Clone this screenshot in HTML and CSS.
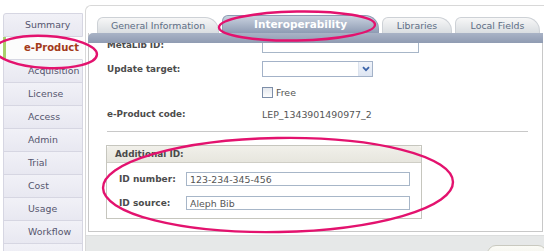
FILE: index.html
```html
<!DOCTYPE html>
<html lang="en">
<head>
  <meta charset="UTF-8">
  <title>e-Product - Interoperability</title>
  <link rel="stylesheet" href="styles.css">
</head>
<body>
  <div class="screen">
    <nav class="side">
      <a class="side-item first">Summary</a>
      <a class="side-item active">e-Product</a>
      <a class="side-item">Acquisition</a>
      <a class="side-item">License</a>
      <a class="side-item">Access</a>
      <a class="side-item">Admin</a>
      <a class="side-item">Trial</a>
      <a class="side-item">Cost</a>
      <a class="side-item">Usage</a>
      <a class="side-item">Workflow</a>
      <a class="side-item">&nbsp;</a>
    </nav>

    <div class="main">
      <div class="tabs">
        <div class="tab tab-general">General Information</div>
        <div class="tab tab-interop selected">Interoperability</div>
        <div class="tab tab-libraries">Libraries</div>
        <div class="tab tab-local">Local Fields</div>
      </div>

      <div class="panel">
        <div class="panel-band"></div>
        <div class="panel-body">
          <div class="row row-metalib">
            <label class="label">MetaLib ID:</label>
            <input class="text-input wide" type="text">
          </div>
          <div class="row row-update">
            <label class="label">Update target:</label>
            <div class="select">
              <span class="select-value"></span>
              <span class="select-arrow">
                <svg width="8" height="6" viewBox="0 0 8 6"><path d="M1 1.2 L4 4.2 L7 1.2" fill="none" stroke="#3b63a8" stroke-width="1.8"/></svg>
              </span>
            </div>
          </div>
          <div class="row row-free">
            <span class="label"></span>
            <span class="checkbox"></span>
            <span class="check-text">Free</span>
          </div>
          <div class="row row-code">
            <label class="label">e-Product code:</label>
            <span class="value">LEP_1343901490977_2</span>
          </div>

          <div class="divider"></div>

          <div class="fieldset">
            <div class="fieldset-head">Additional ID:</div>
            <div class="fieldset-body">
              <div class="id-row">
                <label class="id-label">ID number:</label>
                <input class="text-input id-input" type="text" value="123-234-345-456">
              </div>
              <div class="id-row">
                <label class="id-label">ID source:</label>
                <input class="text-input id-input" type="text" value="Aleph Bib">
              </div>
            </div>
          </div>
        </div>
      </div>

      <div class="footer">
        <button class="submit">Submit</button>
      </div>
    </div>

    <!-- hand-drawn highlight marks over the screenshot -->
    <svg class="marks" width="544" height="251" viewBox="0 0 544 251">
      <ellipse cx="46" cy="52" rx="51" ry="16" transform="rotate(3 46 52)"/>
      <ellipse cx="297" cy="26" rx="78" ry="14.5" transform="rotate(-1 297 26)"/>
      <ellipse cx="278" cy="185" rx="175" ry="47" transform="rotate(-1 278 185)"/>
    </svg>
  </div>
</body>
</html>
```

FILE: styles.css
```css
body {
  margin: 0;
  font-family: "DejaVu Sans", Verdana, sans-serif;
  font-size: 9.4px;
  color: #444;
  background: #fff;
}

.screen {
  position: relative;
  width: 544px;
  height: 251px;
  overflow: hidden;
  display: flex;
}

/* Left side menu */
.side {
  width: 80px;
  margin-left: 3px;
  padding-top: 13px;
  flex-shrink: 0;
}

.side-item {
  display: block;
  height: 22px;
  line-height: 22px;
  border: 1px solid #d6d6e2;
  border-top: none;
  background: linear-gradient(#f1f1f7, #e8e8f1);
  color: #55556e;
  padding-left: 24px;
  white-space: nowrap;
}

.side-item.first {
  border-top: 1px solid #d6d6e2;
  border-top-left-radius: 3px;
  padding-left: 21px;
}

.side-item.active {
  background: #fcfcfc;
  color: #a33a1a;
  font-weight: bold;
  font-size: 10px;
  border-left: 3px solid #a8d06c;
  border-right-color: #fcfcfc;
  padding-left: 18px;
}

/* Main area */
.main {
  flex: 1;
  margin-top: 5px;
  margin-left: 2px;
  border-top: 1px solid #d8d8d8;
  border-left: 1px solid #d8d8d8;
  border-top-left-radius: 6px;
  display: flex;
  flex-direction: column;
  min-width: 0;
  overflow: hidden;
}

.tabs {
  display: flex;
  align-items: flex-end;
  gap: 3px;
  height: 16px;
  padding: 11px 0 0 11px;
  flex-shrink: 0;
}

.tab {
  height: 15px;
  line-height: 15px;
  text-align: center;
  color: #5d6d84;
  background: linear-gradient(#f7f7f7, #d9dde1);
  border: 1px solid #cdd1d6;
  border-bottom: none;
  border-radius: 6px 14px 0 0;
  white-space: nowrap;
}

.tab-general { width: 120px; }
.tab-interop { width: 155px; }
.tab-libraries { width: 68px; }
.tab-local { width: 83px; }

.tab.selected {
  height: 17px;
  line-height: 17px;
  background: linear-gradient(#c9d2df, #8e9bb3);
  border-color: #8e9bb3;
  color: #fff;
  font-weight: bold;
  font-size: 10.5px;
}

.panel {
  margin: 0 1px 0 2px;
  height: 198px;
  flex-shrink: 0;
  display: flex;
  flex-direction: column;
  border: 1px solid #c8c8c8;
  border-top: none;
  background: #fff;
}

.panel-band {
  height: 10px;
  margin: 0 -1px;
  background: linear-gradient(#a9b3c6, #8f9bb2);
  border-top-left-radius: 5px;
  position: relative;
  z-index: 1;
}

.panel-body {
  flex: 1;
  overflow: hidden;
  padding-left: 17px;
}

.row {
  display: flex;
  align-items: center;
  padding-left: 1px;
}

.row-metalib { height: 24px; margin-top: -10px; }
.row-update { height: 24px; }
.row-free { height: 22px; }
.row-code { height: 22px; }

.label {
  width: 155px;
  flex-shrink: 0;
  font-weight: bold;
  font-size: 8.8px;
  color: #4c4c4c;
}

.value {
  color: #555;
}

.text-input {
  box-sizing: border-box;
  height: 15px;
  border: 1px solid #a7b6c8;
  background: #fff;
  font-family: inherit;
  font-size: 9.4px;
  color: #555;
  padding: 0 3px;
  margin: 0;
}

.text-input.wide {
  width: 157px;
}

.select {
  display: flex;
  box-sizing: border-box;
  width: 111px;
  height: 16px;
  border: 1px solid #a3b2c8;
  background: #fff;
}

.select-value {
  flex: 1;
}

.select-arrow {
  width: 13px;
  display: flex;
  align-items: center;
  justify-content: center;
  background: linear-gradient(#f1f4fa, #dde5f2);
  border-left: 1px solid #dce3ee;
}

.checkbox {
  box-sizing: border-box;
  width: 11px;
  height: 11px;
  border: 1px solid #7d8ea8;
  background: linear-gradient(#e4e8ee, #fdfdfd);
  margin-right: 3px;
}

.check-text {
  color: #555;
}

.divider {
  height: 1px;
  background: #c8c8c8;
  margin: 6px 14px 0 1px;
}

/* Additional ID box */
.fieldset {
  width: 316px;
  box-sizing: border-box;
  margin-top: 13px;
  border: 1px solid #c6c6be;
}

.fieldset-head {
  height: 16px;
  line-height: 16px;
  padding-left: 8px;
  background: linear-gradient(#f1f0ea, #e7e6de);
  border-bottom: 1px solid #cfcec6;
  font-weight: bold;
  font-size: 8.9px;
  color: #4a4a4a;
  border-radius: 3px 3px 0 0;
}

.fieldset-body {
  padding: 9px 0 8px 12px;
  display: flex;
  flex-direction: column;
  gap: 10px;
}

.id-row {
  display: flex;
  align-items: center;
}

.id-label {
  width: 67px;
  flex-shrink: 0;
  font-weight: bold;
  font-size: 9px;
  color: #4c4c4c;
}

.id-input {
  width: 224px;
  height: 14px;
}

/* Bottom bar */
.footer {
  flex: 1;
  min-height: 0;
  margin-top: 3px;
  background: #e6e8e8;
  border-top: 1px solid #dcdede;
  display: flex;
  justify-content: flex-end;
  align-items: flex-start;
  padding-top: 9px;
}

.submit {
  flex-shrink: 0;
  width: 60px;
  height: 20px;
  margin-right: -3px;
  border: 1px solid #c9c9bf;
  border-radius: 9px;
  background: linear-gradient(#fbfbf6, #ecece4);
  font-family: inherit;
  font-size: 9.4px;
  color: #333;
  padding: 2px 0 0;
  line-height: 12px;
}

/* Annotation ellipses */
.marks {
  position: absolute;
  top: 0;
  left: 0;
  pointer-events: none;
  z-index: 5;
}

.marks ellipse {
  fill: none;
  stroke: #e3126e;
  stroke-width: 2.4;
}
```
